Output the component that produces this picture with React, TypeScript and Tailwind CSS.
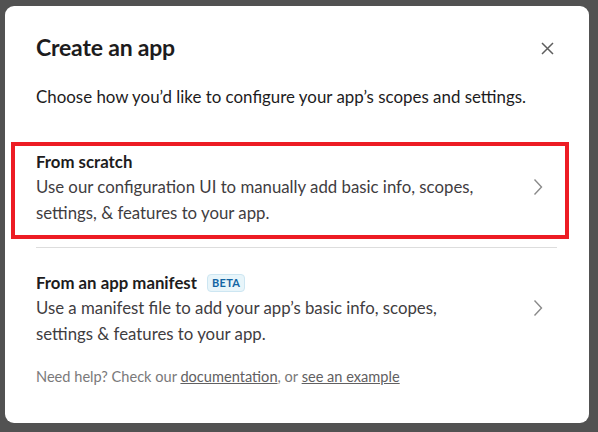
import React from "react";

function Chevron() {
  return (
    <svg width="10" height="18" viewBox="0 0 10 18" className="shrink-0 mt-[27px]">
      <polyline points="1.5,1.5 8.5,9 1.5,16.5" fill="none" stroke="#8a8a8a" strokeWidth="1.4" />
    </svg>
  );
}

export default function App() {
  return (
    <div
      className="w-[598px] h-[432px] overflow-hidden bg-[#525252] pl-[5px] pt-[6px]"
      style={{ fontFamily: "Lato, 'Open Sans', sans-serif" }}
    >
      <div className="w-[584px] h-[417px] rounded-[9px] bg-white flex flex-col pl-[31px] pr-[32px]">
        {/* header */}
        <div className="flex items-start justify-between mt-[27px]">
          <h1 className="text-[23px] leading-[28px] font-bold text-[#1d1c1d] tracking-[-0.2px]">Create an app</h1>
          <button className="mt-[9px] mr-[3px]">
            <svg width="13" height="13" viewBox="0 0 13 13">
              <path d="M1 1 L12 12 M12 1 L1 12" stroke="#5e5e5e" strokeWidth="1.5" fill="none" />
            </svg>
          </button>
        </div>

        <p className="mt-[24px] text-[16.9px] leading-[24px] text-[#1d1c1d]">
          Choose how you’d like to configure your app’s scopes and settings.
        </p>

        {/* option 1, highlighted */}
        <div className="mt-[33px] ml-[-25px] mr-[-12px] border-[4px] border-[#ed1c24] pl-[21px] pr-[22px] pt-[5px] pb-[9px] flex items-start justify-between">
          <div>
            <div className="text-[16.8px] leading-[22px] font-bold text-[#1d1c1d]">From scratch</div>
            <div className="mt-[1px] text-[16.8px] leading-[26px] text-[#3f3d3f]">
              Use our configuration UI to manually add basic info, scopes,
              <br />
              settings, &amp; features to your app.
            </div>
          </div>
          <Chevron />
        </div>

        <div className="mt-[8px] h-px bg-[#dddddd]" />

        {/* option 2 */}
        <div className="mt-[24px] pr-[14px] flex items-start justify-between">
          <div>
            <div className="flex items-center gap-[10px]">
              <span className="text-[16.8px] leading-[22px] font-bold text-[#1d1c1d]">From an app manifest</span>
              <span className="rounded-[4px] border border-[#cde6f2] bg-[#e8f5fa] px-[4px] text-[11px] leading-[16px] font-bold tracking-[0.3px] text-[#1264a3]">
                BETA
              </span>
            </div>
            <div className="mt-[1px] text-[16.8px] leading-[26px] text-[#3f3d3f]">
              Use a manifest file to add your app’s basic info, scopes,
              <br />
              settings &amp; features to your app.
            </div>
          </div>
          <Chevron />
        </div>

        <p className="mt-[20px] text-[14.6px] leading-[20px] text-[#7a797a]">
          Need help? Check our{" "}
          <a className="underline text-[#616061]">documentation</a>, or{" "}
          <a className="underline text-[#616061]">see an example</a>
        </p>
      </div>
    </div>
  );
}
